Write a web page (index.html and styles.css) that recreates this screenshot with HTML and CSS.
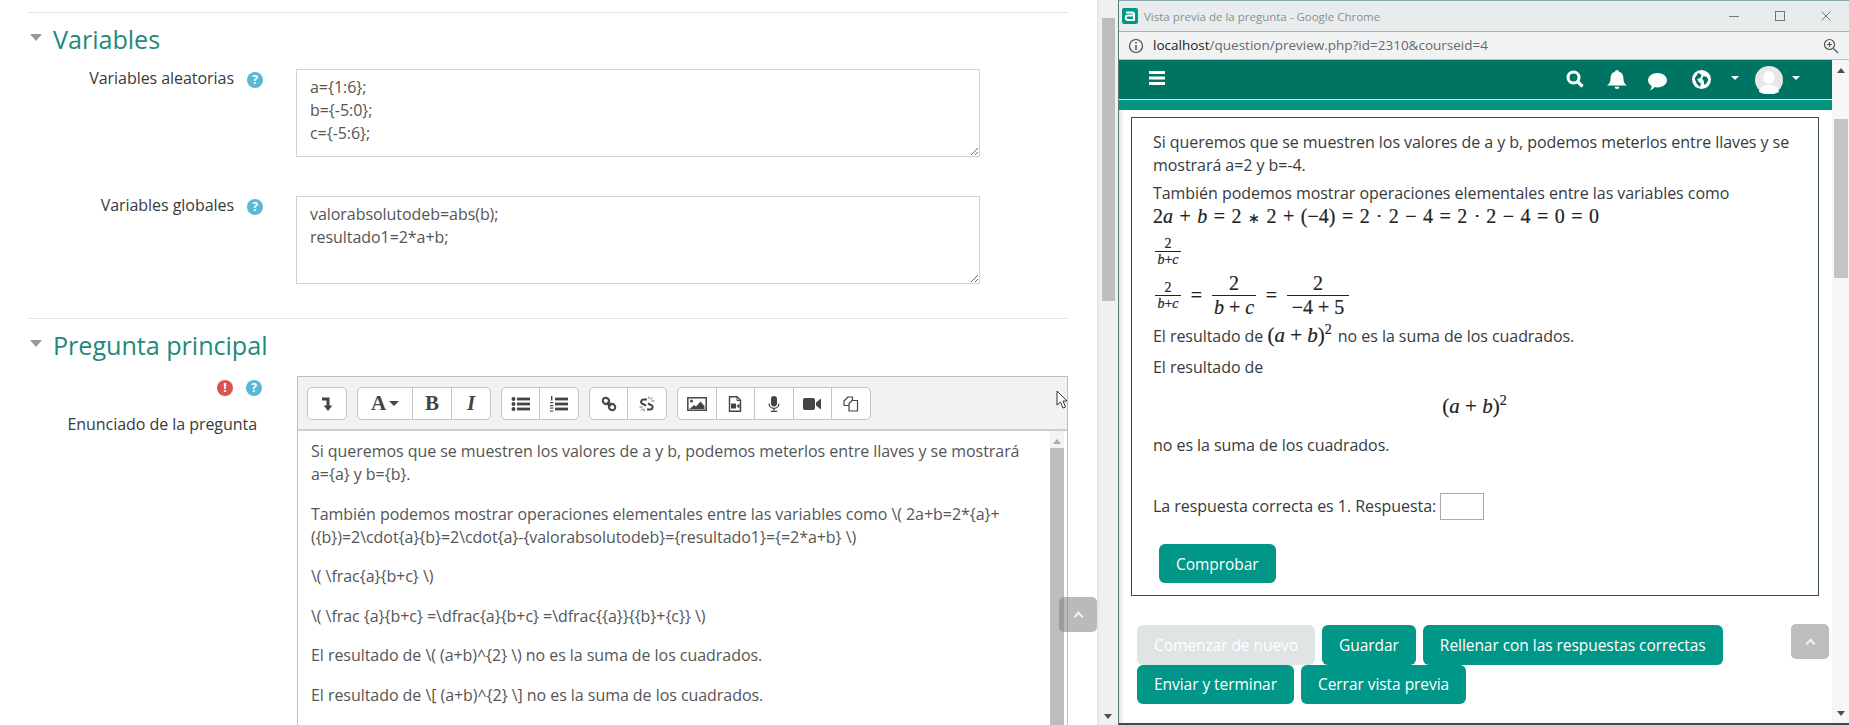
FILE: index.html
```html
<!DOCTYPE html>
<html lang="es">
<head>
  <meta charset="UTF-8" />
  <title>Editar pregunta</title>
  <link rel="stylesheet" href="styles.css">
</head>
<body>

  <!-- Question edit form -->
  <main class="form-pane">
    <div class="form-col">
      <section class="form-section">
        <h2 class="section-title"><span class="collapse-caret"></span>Variables</h2>
        <div class="form-row">
          <div class="row-label"><label>Variables aleatorias</label><span class="badge badge-help">?</span></div>
          <textarea class="code-box" spellcheck="false">a={1:6};
b={-5:0};
c={-5:6};</textarea>
        </div>
        <div class="form-row">
          <div class="row-label"><label>Variables globales</label><span class="badge badge-help">?</span></div>
          <textarea class="code-box" spellcheck="false">valorabsolutodeb=abs(b);
resultado1=2*a+b;</textarea>
        </div>
      </section>

      <section class="form-section">
        <h2 class="section-title"><span class="collapse-caret"></span>Pregunta principal</h2>
        <div class="form-row">
          <div class="row-label row-label-stack">
            <div class="badge-line"><span class="badge badge-error">!</span><span class="badge badge-help">?</span></div>
            <label>Enunciado de la pregunta</label>
          </div>
          <div class="editor">
            <div class="toolbar">
              <div class="tool-group">
                <button class="tool tool-w1"><svg class="icon" viewBox="0 0 16 16"><path d="M3 1.500h7.500v8h2.800L9 15 4.700 9.500h2.800V4.500H3z" fill="#444"/></svg></button>
              </div>
              <div class="tool-group">
                <button class="tool tool-font"><span class="glyph-a">A</span><span class="mini-caret"></span></button>
                <button class="tool tool-b">B</button>
                <button class="tool tool-i">I</button>
              </div>
              <div class="tool-group">
                <button class="tool tool-w2"><svg class="icon icon-wide" viewBox="0 0 20 16"><g fill="#444"><circle cx="2.500" cy="3" r="2"/><circle cx="2.500" cy="8" r="2"/><circle cx="2.500" cy="13" r="2"/><rect x="6" y="1.600" width="13" height="2.800"/><rect x="6" y="6.600" width="13" height="2.800"/><rect x="6" y="11.600" width="13" height="2.800"/></g></svg></button>
                <button class="tool tool-w2"><svg class="icon icon-wide" viewBox="0 0 20 16"><g fill="#444"><rect x="6" y="1.600" width="13" height="2.800"/><rect x="6" y="6.600" width="13" height="2.800"/><rect x="6" y="11.600" width="13" height="2.800"/><rect x="2" y="0" width="1.400" height="4.600"/><rect x="1" y="6" width="3.400" height="1.200"/><rect x="1" y="9" width="3.400" height="1.200"/><rect x="1" y="11.500" width="3.400" height="1.100"/><rect x="1" y="14.500" width="3.400" height="1.100"/></g></svg></button>
              </div>
              <div class="tool-group">
                <button class="tool tool-w2"><svg class="icon" viewBox="0 0 16 16"><g fill="none" stroke="#444" stroke-width="2"><ellipse cx="5" cy="5" rx="3.400" ry="3" transform="rotate(38 5 5)"/><ellipse cx="11" cy="11" rx="3.400" ry="3" transform="rotate(38 11 11)"/><path d="M6 6l4 4"/></g></svg></button>
                <button class="tool tool-w2"><svg class="icon" viewBox="0 0 16 16"><g fill="none" stroke="#444" stroke-width="2"><path d="M8 3.500H4.500a2.300 2.300 0 0 0-1 4.400L7 9.500"/><path d="M9 7.500l3.200 1.700a2.300 2.300 0 0 1-1 4.400H8"/></g><path d="M10 .5v2.500M13.500 1.500l-2 2M15.500 5h-3M.5 11h3M2 14.500l2-2M5 15.500V13" stroke="#444" stroke-width=".8" fill="none"/></svg></button>
              </div>
              <div class="tool-group">
                <button class="tool tool-w3"><svg class="icon icon-wide" viewBox="0 0 20 16"><rect x=".8" y="1.800" width="18.400" height="12.400" fill="none" stroke="#444" stroke-width="1.500"/><circle cx="4.500" cy="5" r="1.500" fill="#444"/><path d="M2.500 13l4.500-4 2 1.500L13.500 5.500 17.500 10v3z" fill="#444"/></svg></button>
                <button class="tool tool-w3"><svg class="icon" viewBox="0 0 16 16"><path d="M2.500.8h7.500l3.500 3.500v10.900h-11z" fill="none" stroke="#444" stroke-width="1.400"/><path d="M10 1v3.500h3.500" fill="none" stroke="#444" stroke-width="1"/><rect x="4" y="7.500" width="5" height="5" rx=".6" fill="#444"/><path d="M9.500 10l3-2.500v5z" fill="#444"/></svg></button>
                <button class="tool tool-w3"><svg class="icon" viewBox="0 0 16 16"><rect x="5" y="0" width="6" height="10.500" rx="3" fill="#444"/><path d="M3 7.500c0 6.500 10 6.500 10 0M8 12.500v2.500M4.800 15.300h6.400" fill="none" stroke="#444" stroke-width="1.200"/></svg></button>
                <button class="tool tool-w3"><svg class="icon icon-wide" viewBox="0 0 20 16"><rect x="1" y="2" width="12" height="12" rx="2" fill="#444"/><path d="M14 6.500L19 2.500v11l-5-4z" fill="#444"/></svg></button>
                <button class="tool tool-w4"><svg class="icon" viewBox="0 0 16 16"><g fill="#fff" stroke="#444" stroke-width="1.200" stroke-linejoin="round"><path d="M1 5l4-4h4.500v8.500H1z"/><path d="M6 7.500l3-3h5.500v10.500H6z"/></g></svg></button>
              </div>
            </div>
            <div class="editor-body">
              <div class="editor-text">
                <p>Si queremos que se muestren los valores de a y b, podemos meterlos entre llaves y se mostrará a={a} y b={b}.</p>
                <p>También podemos mostrar operaciones elementales entre las variables como \( 2a+b=2*{a}+({b})=2\cdot{a}{b}=2\cdot{a}-{valorabsolutodeb}={resultado1}={=2*a+b} \)</p>
                <p>\( \frac{a}{b+c} \)</p>
                <p>\( \frac {a}{b+c} =\dfrac{a}{b+c} =\dfrac{{a}}{{b}+{c}} \)</p>
                <p>El resultado de \( (a+b)^{2} \) no es la suma de los cuadrados.</p>
                <p>El resultado de \[ (a+b)^{2} \] no es la suma de los cuadrados.</p>
              </div>
              <div class="editor-scroll">
                <span class="arrow-up"></span>
                <div class="editor-thumb"></div>
              </div>
            </div>
          </div>
        </div>
      </section>
    </div>
    <div class="pane-scroll">
      <div class="pane-thumb"></div>
      <span class="arrow-down pane-arrow"></span>
    </div>
    <button class="back-top back-top-form"><span class="chev"></span></button>
    <svg class="mouse-cursor" viewBox="0 0 12 20"><path d="M1 1v14l3.500-3 2.500 6 2.500-1-2.500-6H11z" fill="#fff" stroke="#333" stroke-width="1"/></svg>
  </main>

  <!-- Preview popup -->
  <section class="preview-window">
    <header class="win-title">
      <svg class="win-logo" viewBox="0 0 16 16"><rect width="16" height="16" rx="2" fill="#009688"/><path d="M4 4.500h6a2 2 0 0 1 2 2V12H6a2 2 0 0 1 0-4.500h6" fill="none" stroke="#fff" stroke-width="2"/></svg>
      <span class="win-name">Vista previa de la pregunta - Google Chrome</span>
      <div class="win-controls">
        <svg viewBox="0 0 12 12"><path d="M1 6.500h10" stroke="#777" fill="none"/></svg>
        <svg viewBox="0 0 12 12"><rect x="1.500" y="1.500" width="9" height="9" stroke="#777" fill="none"/></svg>
        <svg viewBox="0 0 12 12"><path d="M1.500 1.500l9 9M10.500 1.500l-9 9" stroke="#777" fill="none"/></svg>
      </div>
    </header>
    <div class="win-address">
      <svg class="addr-icon" viewBox="0 0 16 16"><circle cx="8" cy="8" r="6.500" fill="none" stroke="#444" stroke-width="1.200"/><path d="M8 7v5M8 4v1.600" stroke="#444" stroke-width="1.400"/></svg>
      <span class="addr-url"><span class="addr-host">localhost</span>/question/preview.php?id=2310&amp;courseid=4</span>
      <svg class="addr-zoom" viewBox="0 0 16 16"><circle cx="6.500" cy="6.500" r="5" fill="none" stroke="#555" stroke-width="1.200"/><path d="M10.500 10.500l4.500 4.500M4 6.500h5M6.500 4v5" stroke="#555" stroke-width="1.200"/></svg>
    </div>
    <div class="preview-body">
      <div class="preview-page">
        <nav class="top-nav">
          <svg class="nav-burger" viewBox="0 0 16 14"><path d="M0 0h16v3H0zM0 5.500h16v3H0zM0 11h16v3H0z" fill="#fff"/></svg>
          <div class="nav-icons">
            <svg class="nav-search" viewBox="0 0 18 18"><circle cx="7.500" cy="7.500" r="5.500" fill="none" stroke="#fff" stroke-width="3"/><path d="M11.500 11.500l5 5" stroke="#fff" stroke-width="3.200"/></svg>
            <svg class="nav-bell" viewBox="0 0 18 18"><path d="M9 0c1.200 0 1.800.8 1.800 1.600 3.200.9 4 3.600 4 6 0 3 1 4.600 3.200 6.400H0c2.200-1.800 3.200-3.400 3.200-6.400 0-2.400.8-5.100 4-6C7.200.8 7.800 0 9 0zM6.800 15h4.400a2.200 2.200 0 0 1-4.400 0z" fill="#fff"/></svg>
            <svg class="nav-chat" viewBox="0 0 20 18"><path d="M10 1c5 0 9 3 9 6.800s-4 6.800-9 6.800c-1 0-2-.1-2.800-.3C6 16 4 17.500 2.500 17.500 3.800 16.200 4.500 14.800 4.300 13 2.300 11.800 1 10 1 7.800 1 4 5 1 10 1z" fill="#fff"/></svg>
            <svg class="nav-globe" viewBox="0 0 18 18"><circle cx="9" cy="9" r="9" fill="#fff"/><path d="M6 2.500l3 2-1 3-3 1 1.500 3 2 1-1 3.500-3-3L2.500 8zM11 6l3 .5 1.500 3-2 3.500-2 1-.5-4-1.500-2z" fill="#007463"/></svg>
            <span class="nav-caret nav-caret-globe"></span>
            <div class="nav-avatar"><svg viewBox="0 0 28 28"><circle cx="14" cy="14" r="14" fill="#e8e8e8"/><ellipse cx="14" cy="11.500" rx="5.500" ry="6.500" fill="#fff"/><path d="M4 26c1-6 6-7 10-7s9 1 10 7l-5 2H9z" fill="#fff"/></svg></div>
            <span class="nav-caret"></span>
          </div>
        </nav>
        <div class="nav-strip"></div>

        <div class="question-box">
          <p class="q-tight">Si queremos que se muestren los valores de a y b, podemos meterlos entre llaves y se mostrará a=2 y b=-4.</p>
          <p class="q-tight">También podemos mostrar operaciones elementales entre las variables como<br>
            <span class="math math-line">2<i>a</i> + <i>b</i> = 2 <span class="ast">∗</span> 2 + (−4) = 2 ⋅ 2 − 4 = 2 ⋅ 2 − 4 = 0 = 0</span></p>
          <p class="q-tight frac-row">
            <span class="math frac frac-small"><span>2</span><span class="den"><i>b</i>+<i>c</i></span></span>
          </p>
          <p class="q-tight frac-row frac-row-big">
            <span class="math frac frac-small"><span>2</span><span class="den"><i>b</i>+<i>c</i></span></span>
            <span class="math eq">=</span>
            <span class="math frac frac-big frac-b"><span>2</span><span class="den"><i>b</i> + <i>c</i></span></span>
            <span class="math eq">=</span>
            <span class="math frac frac-big frac-n"><span>2</span><span class="den">−4 + 5</span></span>
          </p>
          <p class="q-tight q-inline">El resultado de <span class="math math-inline">(<i>a</i> + <i>b</i>)<sup>2</sup></span> no es la suma de los cuadrados.</p>
          <p class="q-tight">El resultado de</p>
          <div class="math math-display">(<i>a</i> + <i>b</i>)<sup>2</sup></div>
          <p class="q-tight">no es la suma de los cuadrados.</p>
          <p class="q-answer">La respuesta correcta es 1. Respuesta: <input class="answer-input" type="text"></p>
          <button class="btn btn-check">Comprobar</button>
        </div>

        <div class="controls">
          <button class="btn btn-off">Comenzar de nuevo</button>
          <button class="btn">Guardar</button>
          <button class="btn">Rellenar con las respuestas correctas</button>
          <button class="btn">Enviar y terminar</button>
          <button class="btn">Cerrar vista previa</button>
        </div>
        <button class="back-top back-top-preview"><span class="chev"></span></button>
      </div>
      <div class="preview-scroll">
        <span class="arrow-up"></span>
        <div class="preview-thumb"></div>
        <span class="arrow-down"></span>
      </div>
    </div>
  </section>

</body>
</html>
```

FILE: styles.css
```css
* {
  box-sizing: border-box;
}
html, body {
  height: 725px;
  margin: 0;
  overflow: hidden;
}
body {
  display: flex;
  font-family: "Open Sans", sans-serif;
  font-size: 16px;
  letter-spacing: -0.05px;
  line-height: 23px;
  color: #373a3c;
  background: #fff;
}
p {
  margin: 0;
}
button {
  font-family: inherit;
  letter-spacing: inherit;
}

/* left pane */
.form-pane {
  position: relative;
  display: flex;
  width: 1118px;
  height: 725px;
  flex: none;
  overflow: hidden;
}
.form-col {
  width: 1097px;
  padding: 12px 29px 0 28px;
  flex: none;
}
.form-section {
  border-top: 1px solid #dfe3e3;
  height: 306px;
}
.section-title {
  display: flex;
  align-items: center;
  height: 30px;
  margin: 11px 0 15px;
  font-size: 25.200px;
  font-weight: 400;
  color: #1d8a7c;
}
.collapse-caret {
  width: 0;
  height: 0;
  margin: -4px 11px 0 2px;
  border-left: 6.500px solid transparent;
  border-right: 6.500px solid transparent;
  border-top: 7px solid #999;
}
.form-row {
  display: flex;
  margin-bottom: 39px;
}
.row-label {
  display: flex;
  justify-content: flex-end;
  width: 268px;
  height: 23px;
  padding: 0 57px 0 0;
  flex: none;
  margin-top: -2px;
}
.row-label .badge {
  margin: 5px -24px 0 13px;
}
.row-label-stack {
  display: block;
  padding: 0 39px 0 0;
  text-align: right;
  height: auto;
  margin-top: 5px;
}
.row-label-stack .badge {
  margin: 0;
}
.badge-line {
  display: flex;
  justify-content: flex-end;
  gap: 13px;
  margin: 0 -5px 17px 0;
}
.badge {
  display: flex;
  align-items: center;
  justify-content: center;
  width: 16px;
  height: 16px;
  flex: none;
  border-radius: 50%;
  font-size: 12px;
  font-weight: 700;
  line-height: 16px;
  color: #fff;
}
.badge-help {
  background: #5ab7d8;
}
.badge-error {
  background: #d9534f;
}
.code-box {
  display: block;
  width: 684px;
  height: 88px;
  padding: 6px 13px;
  border: 1px solid #cfd4d4;
  font-family: inherit;
  font-size: 16px;
  letter-spacing: inherit;
  line-height: 23px;
  color: #555;
  outline: none;
}

/* editor */
.editor {
  width: 771px;
  height: 360px;
  margin: 1px 0 0 1px;
  flex: none;
  border: 1px solid #bdbdbd;
  border-bottom: 0;
}
.toolbar {
  display: flex;
  gap: 10px;
  height: 54px;
  padding: 10px 0 0 9px;
  background: #f2f2f2;
  border-bottom: 2px solid #cfcfcf;
}
.tool-group {
  display: flex;
  height: 33px;
  border: 1px solid #c4c4c4;
  border-radius: 5px;
  background: #fff;
}
.tool {
  display: flex;
  align-items: center;
  justify-content: center;
  padding: 0;
  border: 0;
  border-right: 1px solid #c4c4c4;
  background: none;
}
.tool:last-child {
  border-right: 0;
}
.tool-w1 { width: 38px; }
.tool-w2 { width: 38px; }
.tool-w3 { width: 38.500px; }
.tool-w4 { width: 38px; }
.tool-font {
  width: 55px;
  gap: 3px;
}
.tool-b, .tool-i, .glyph-a {
  font-family: "Liberation Serif", serif;
  font-size: 21px;
  font-weight: 700;
  color: #444;
}
.tool-b { width: 39px; }
.tool-i { width: 38px; font-style: italic; }
.mini-caret {
  width: 0;
  height: 0;
  border-left: 5px solid transparent;
  border-right: 5px solid transparent;
  border-top: 5px solid #444;
}
.icon {
  width: 16px;
  height: 16px;
}
.icon-wide {
  width: 20px;
}
.editor-body {
  display: flex;
  justify-content: space-between;
  height: 295px;
  color: #555;
}
.editor-text {
  width: 742px;
  padding: 9px 12px 0 13px;
}
.editor-text p {
  margin-bottom: 16.500px;
}
.editor-scroll {
  position: relative;
  width: 14px;
  margin-right: 3px;
  background: #f3f3f3;
}
.editor-thumb {
  height: 280px;
  margin-top: 17px;
  background: #bdbdbd;
}
.arrow-up, .arrow-down {
  position: absolute;
  left: 50%;
  width: 0;
  height: 0;
  margin-left: -4px;
  border-left: 4px solid transparent;
  border-right: 4px solid transparent;
}
.arrow-up {
  top: 8px;
  border-bottom: 5px solid #505050;
}
.editor-scroll .arrow-up {
  border-bottom-color: #aaa;
}
.arrow-down {
  bottom: 7px;
  border-top: 5px solid #505050;
}

/* left pane scrollbar */
.pane-scroll {
  position: relative;
  width: 21px;
  flex: none;
  padding: 18px 3px 0 5px;
  background: #f0f0f0;
  box-shadow: inset 3px 0 3px -2px #ddd;
}
.pane-thumb {
  height: 283px;
  background: #bdbdbd;
}
.pane-arrow {
  bottom: 6px;
}
.back-top {
  position: absolute;
  display: flex;
  align-items: center;
  justify-content: center;
  width: 38px;
  height: 35px;
  padding: 0;
  border: 0;
  border-radius: 5px;
  background: rgba(130, 130, 130, 0.55);
}
.chev {
  width: 7px;
  height: 7px;
  margin-top: 4px;
  border-top: 2px solid #f2f2f2;
  border-left: 2px solid #f2f2f2;
  transform: rotate(45deg);
}
.back-top-form {
  left: 1059px;
  top: 597px;
}
.mouse-cursor {
  position: absolute;
  left: 1056px;
  top: 390px;
  width: 12px;
  height: 20px;
}

/* preview window */
.preview-window {
  display: flex;
  flex-direction: column;
  width: 731px;
  height: 725px;
  flex: none;
  border-top: 1px solid #8aa;
  border-left: 1px solid #5f7474;
  border-bottom: 2px solid #37504f;
}
.win-title {
  display: flex;
  align-items: center;
  height: 31px;
  padding-left: 3px;
  background: #e8ecec;
  border-bottom: 1px solid #a9b0b0;
  letter-spacing: 0;
}
.win-logo {
  width: 16px;
  height: 16px;
  margin-right: 6px;
}
.win-name {
  font-size: 11.500px;
  color: #8a9090;
}
.win-controls {
  display: flex;
  gap: 34px;
  margin-left: auto;
  padding-right: 17px;
}
.win-controls svg {
  width: 12px;
  height: 12px;
}
.win-address {
  display: flex;
  align-items: center;
  height: 28px;
  padding: 0 10px 0 9px;
  background: #f1f3f3;
  border-bottom: 1px solid #b7c0bf;
  letter-spacing: 0;
}
.addr-icon {
  width: 16px;
  height: 16px;
  margin-right: 9px;
}
.addr-url {
  font-size: 13.500px;
  color: #66696a;
}
.addr-host {
  color: #222;
}
.addr-zoom {
  width: 16px;
  height: 16px;
  margin-left: auto;
}
.preview-body {
  display: flex;
  flex: 1;
  min-height: 0;
}
.preview-page {
  position: relative;
  width: 713px;
  flex: none;
  box-shadow: inset 6px 0 5px -4px #ddd;
}
.top-nav {
  display: flex;
  align-items: center;
  justify-content: space-between;
  height: 40px;
  padding: 0 32px 0 30px;
  background: #007463;
  border-bottom: 1px solid #dff;
}
.nav-burger {
  width: 16px;
  height: 14px;
  margin-top: -3px;
}
.nav-icons {
  display: flex;
  align-items: center;
}
.nav-search {
  width: 18px;
  height: 18px;
  margin-right: 23px;
  margin-top: -2px;
}
.nav-bell {
  width: 20px;
  height: 20px;
  margin-right: 20px;
}
.nav-chat {
  width: 21px;
  height: 19px;
  margin-right: 24px;
  margin-top: 3px;
}
.nav-globe {
  width: 19px;
  height: 19px;
  margin-right: 20px;
}
.nav-caret {
  width: 0;
  height: 0;
  border-left: 4.500px solid transparent;
  border-right: 4.500px solid transparent;
  border-top: 4.500px solid #fff;
  margin-top: -4px;
}
.nav-caret-globe {
  margin-right: 16px;
}
.nav-avatar {
  width: 28px;
  height: 28px;
  margin-right: 9px;
}
.nav-avatar svg {
  display: block;
}
.nav-strip {
  height: 10px;
  background: #009682;
}

.question-box {
  width: 688px;
  height: 479px;
  margin: 7px 0 0 12px;
  padding: 13px 22px 0 21px;
  border: 1px solid #37504f;
}
.q-tight {
  margin-bottom: 5px;
}
.math {
  font-family: "Liberation Serif", serif;
  color: #222;
  letter-spacing: 0;
  -webkit-text-stroke: 0.2px #222;
}
.math-line {
  font-size: 20px;
  line-height: 23px;
  word-spacing: 1.500px;
}
.ast {
  font-size: 14px;
}
.math-inline {
  font-size: 21px;
  line-height: 20px;
  margin-right: 2px;
}
.q-inline {
  margin-bottom: 8px;
}
.math sup {
  font-size: 14px;
  line-height: 0;
}
.frac-row {
  display: flex;
  align-items: center;
  height: 32px;
}
.frac-row-big {
  height: 46px;
  margin-top: 5px;
  margin-bottom: 7px;
}
.frac {
  display: inline-flex;
  flex-direction: column;
  align-items: center;
}
.frac .den {
  border-top: 1px solid #222;
  width: 100%;
  text-align: center;
}
.frac-small {
  width: 26px;
  margin-left: 2px;
  font-size: 14px;
  line-height: 15px;
}
.frac-big {
  font-size: 20px;
  line-height: 23px;
}
.frac-b { width: 44px; }
.frac-n { width: 62px; }
.eq {
  width: 31px;
  font-size: 20px;
  text-align: center;
}
.math-display {
  height: 44px;
  margin: 4.500px 0 6px;
  font-size: 21px;
  line-height: 44px;
  text-align: center;
}
.q-answer {
  margin-top: 35.500px;
  display: flex;
  align-items: center;
  gap: 4px;
}
.answer-input {
  width: 44px;
  height: 27px;
  border: 1px solid #aaa;
  padding: 0;
  outline: none;
}
.btn {
  height: 39.500px;
  padding: 0 17px;
  border: 0;
  border-radius: 6px;
  background: #009688;
  color: #fff;
  font-size: 15.500px;
}
.btn-check {
  display: block;
  height: 39px;
  margin: 24.500px 0 0 6px;
}
.btn-off {
  background: #dfe4e5;
}
.controls {
  display: flex;
  flex-wrap: wrap;
  gap: 0 7px;
  width: 620px;
  margin: 29px 0 0 18px;
}
.back-top-preview {
  right: 3px;
  top: 564px;
  background: #bdbdbd;
}

/* preview scrollbar */
.preview-scroll {
  position: relative;
  flex: 1;
  padding: 59px 1px 0 2px;
  background: #f7f7f7;
}
.preview-thumb {
  height: 159px;
  background: #c4c4c4;
}
```
